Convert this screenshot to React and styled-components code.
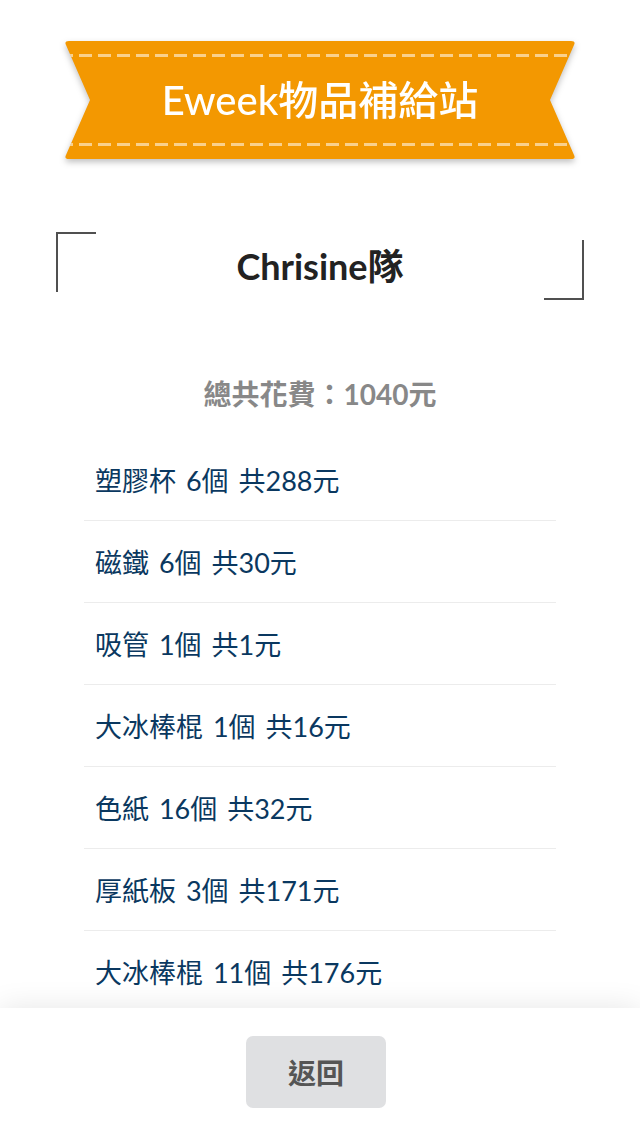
import React from 'react'
import styled, { createGlobalStyle } from 'styled-components'

const items = [
  { name: '塑膠杯', qty: 6, total: 288 },
  { name: '磁鐵', qty: 6, total: 30 },
  { name: '吸管', qty: 1, total: 1 },
  { name: '大冰棒棍', qty: 1, total: 16 },
  { name: '色紙', qty: 16, total: 32 },
  { name: '厚紙板', qty: 3, total: 171 },
  { name: '大冰棒棍', qty: 11, total: 176 },
]

function App() {
  return (
    <>
      <GlobalStyle />
      <Page>
        <Content>
          <BannerShadow>
            <Ribbon>
              <h1>Eweek物品補給站</h1>
            </Ribbon>
          </BannerShadow>

          <TeamBox>
            <h2>Chrisine隊</h2>
          </TeamBox>

          <Total>總共花費：1040元</Total>

          <List>
            {items.map((item, i) => (
              <Row key={i}>
                {item.name} {item.qty}個 共{item.total}元
              </Row>
            ))}
          </List>
        </Content>

        <Footer>
          <BackButton>返回</BackButton>
        </Footer>
      </Page>
    </>
  )
}

export default App

const GlobalStyle = createGlobalStyle`
  html, body {
    margin: 0;
    padding: 0;
    background: #fff;
  }
  body {
    font-family: Lato, "Noto Sans CJK TC", sans-serif;
  }
`

const Page = styled.div`
  width: 640px;
  height: 1136px;
  display: flex;
  flex-direction: column;
  overflow: hidden;
`

const Content = styled.main`
  flex: 1;
  min-height: 0;
  overflow: hidden;
  display: flex;
  flex-direction: column;
  align-items: center;
  padding-top: 41px;

  & > * {
    flex-shrink: 0;
  }
`

const BannerShadow = styled.div`
  filter: drop-shadow(0 3px 3px rgba(0, 0, 0, 0.25));
`

const Ribbon = styled.div`
  width: 512px;
  height: 118px;
  display: flex;
  align-items: center;
  justify-content: center;
  background-color: #f39801;
  background-image:
    repeating-linear-gradient(90deg, rgba(255, 255, 255, 0.55) 0 13px, transparent 13px 19px),
    repeating-linear-gradient(90deg, rgba(255, 255, 255, 0.55) 0 13px, transparent 13px 19px);
  background-size: 100% 3px, 100% 3px;
  background-position: -4px 13px, -4px 102px;
  background-repeat: no-repeat;
  clip-path: path('M5,0 H507 Q512,0 510,4 L486,59 L510,114 Q512,118 507,118 H5 Q0,118 2,114 L26,59 L2,4 Q0,0 5,0 Z');

  h1 {
    margin: 0;
    color: #fff;
    font-size: 40px;
    font-weight: 500;
    line-height: 1;
    padding-bottom: 1px;
  }
`

const TeamBox = styled.div`
  position: relative;
  box-sizing: border-box;
  width: 528px;
  height: 68px;
  margin-top: 73px;
  display: flex;
  align-items: center;
  justify-content: center;

  &::before {
    content: '';
    position: absolute;
    top: 0;
    left: 0;
    width: 40px;
    height: 60px;
    border-top: 2px solid #505050;
    border-left: 2px solid #505050;
    box-sizing: border-box;
  }

  &::after {
    content: '';
    position: absolute;
    bottom: 0;
    right: 0;
    width: 40px;
    height: 60px;
    border-bottom: 2px solid #505050;
    border-right: 2px solid #505050;
    box-sizing: border-box;
  }

  h2 {
    margin: 0;
    font-size: 36px;
    font-weight: 700;
    color: #222;
    line-height: 1;
  }
`

const Total = styled.div`
  margin-top: 76px;
  font-size: 28px;
  font-weight: 700;
  color: #888;
  line-height: 36px;
`

const List = styled.ul`
  list-style: none;
  margin: 27px 0 0;
  padding: 0;
  width: 472px;
`

const Row = styled.li`
  box-sizing: border-box;
  height: 82px;
  display: flex;
  align-items: center;
  padding: 0 11px 1px;
  font-size: 27px;
  word-spacing: 3px;
  color: #0a3860;
  border-bottom: 1.5px solid #ececec;
  white-space: pre;
`

const Footer = styled.footer`
  flex: 0 0 128px;
  position: relative;
  z-index: 1;
  background: #fff;
  display: flex;
  justify-content: center;
  align-items: flex-start;
  padding: 28px 8px 0 0;
  box-sizing: border-box;
  box-shadow: 0 0 28px rgba(0, 0, 0, 0.1);
`

const BackButton = styled.button`
  width: 140px;
  height: 72px;
  border: none;
  border-radius: 7px;
  background: #dfe0e2;
  color: #555;
  font-family: Lato, "Noto Sans CJK TC", sans-serif;
  font-size: 28px;
  font-weight: 700;
  cursor: pointer;
`
